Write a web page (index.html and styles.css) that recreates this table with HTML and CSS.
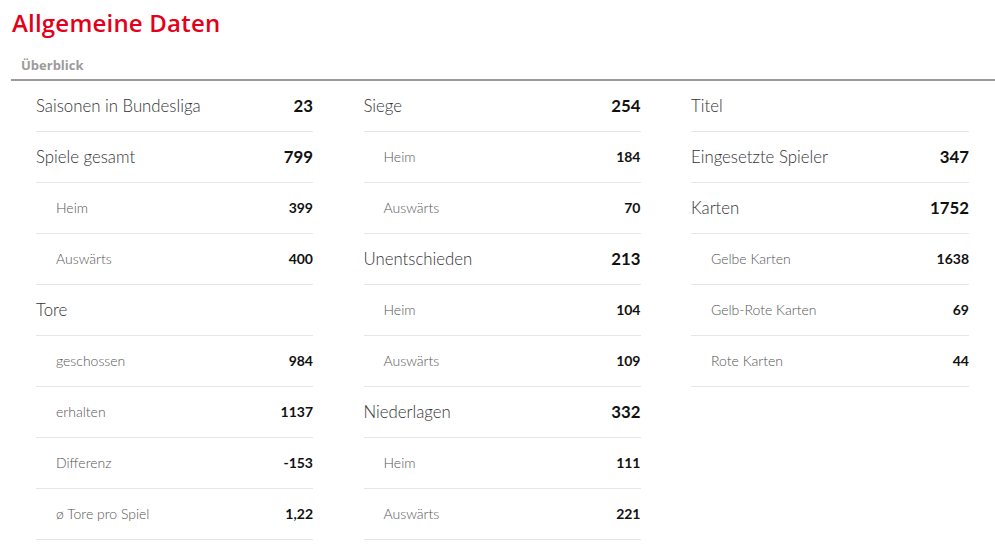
FILE: index.html
```html
<!DOCTYPE html>
<html lang="de">
<head>
    <meta charset="UTF-8">
    <title>Allgemeine Daten</title>
    <link rel="stylesheet" href="styles.css">
</head>
<body>
    <div class="page">
        <h1 class="title">Allgemeine Daten</h1>

        <div class="tab-bar">
            <span class="tab">Überblick</span>
        </div>

        <div class="columns">
            <!-- Spalte 1 -->
            <div class="column">
                <div class="row"><span class="label">Saisonen in Bundesliga</span><span class="value">23</span></div>
                <div class="row"><span class="label">Spiele gesamt</span><span class="value">799</span></div>
                <div class="row sub"><span class="label">Heim</span><span class="value">399</span></div>
                <div class="row sub"><span class="label">Auswärts</span><span class="value">400</span></div>
                <div class="row"><span class="label">Tore</span><span class="value"></span></div>
                <div class="row sub"><span class="label">geschossen</span><span class="value">984</span></div>
                <div class="row sub"><span class="label">erhalten</span><span class="value">1137</span></div>
                <div class="row sub"><span class="label">Differenz</span><span class="value">-153</span></div>
                <div class="row sub"><span class="label">ø Tore pro Spiel</span><span class="value">1,22</span></div>
            </div>

            <!-- Spalte 2 -->
            <div class="column">
                <div class="row"><span class="label">Siege</span><span class="value">254</span></div>
                <div class="row sub"><span class="label">Heim</span><span class="value">184</span></div>
                <div class="row sub"><span class="label">Auswärts</span><span class="value">70</span></div>
                <div class="row"><span class="label">Unentschieden</span><span class="value">213</span></div>
                <div class="row sub"><span class="label">Heim</span><span class="value">104</span></div>
                <div class="row sub"><span class="label">Auswärts</span><span class="value">109</span></div>
                <div class="row"><span class="label">Niederlagen</span><span class="value">332</span></div>
                <div class="row sub"><span class="label">Heim</span><span class="value">111</span></div>
                <div class="row sub"><span class="label">Auswärts</span><span class="value">221</span></div>
            </div>

            <!-- Spalte 3 -->
            <div class="column">
                <div class="row"><span class="label">Titel</span><span class="value"></span></div>
                <div class="row"><span class="label">Eingesetzte Spieler</span><span class="value">347</span></div>
                <div class="row"><span class="label">Karten</span><span class="value">1752</span></div>
                <div class="row sub"><span class="label">Gelbe Karten</span><span class="value">1638</span></div>
                <div class="row sub"><span class="label">Gelb-Rote Karten</span><span class="value">69</span></div>
                <div class="row sub"><span class="label">Rote Karten</span><span class="value">44</span></div>
            </div>
        </div>
    </div>
</body>
</html>
```

FILE: styles.css
```css
* {
    box-sizing: border-box;
    margin: 0;
    padding: 0;
}

body {
    font-family: Lato, "Open Sans", sans-serif;
    background-color: #fff;
    color: #222;
}

.page {
    padding: 7px 0 0 11px;
}

/* Titel */
.title {
    font-family: "Open Sans", Lato, sans-serif;
    color: #e2001a;
    font-size: 24px;
    font-weight: 600;
    line-height: 32px;
    padding-left: 1px;
    letter-spacing: 0.2px;
}

/* Reiter */
.tab-bar {
    margin-top: 15px;
    border-bottom: 2px solid #9b9b9b;
    padding: 0 0 5px 10px;
}

.tab {
    font-family: "Open Sans", Lato, sans-serif;
    font-size: 13px;
    font-weight: 700;
    color: #9b9b9b;
}

/* Spalten */
.columns {
    display: grid;
    grid-template-columns: 277px 277px 278px;
    column-gap: 50.5px;
    padding-left: 25px;
    align-items: start;
}

.row {
    display: flex;
    justify-content: space-between;
    align-items: center;
    height: 51px;
    padding-bottom: 2px;
    border-bottom: 1px solid #e6e6e6;
    font-size: 16.8px;
}

.row .label {
    font-weight: 300;
    color: #333;
}

.row .value {
    font-weight: 700;
    color: #111;
}

.row.sub {
    font-size: 14px;
    padding-bottom: 1px;
}

.row.sub .label {
    padding-left: 20px;
    color: #555;
}
```
